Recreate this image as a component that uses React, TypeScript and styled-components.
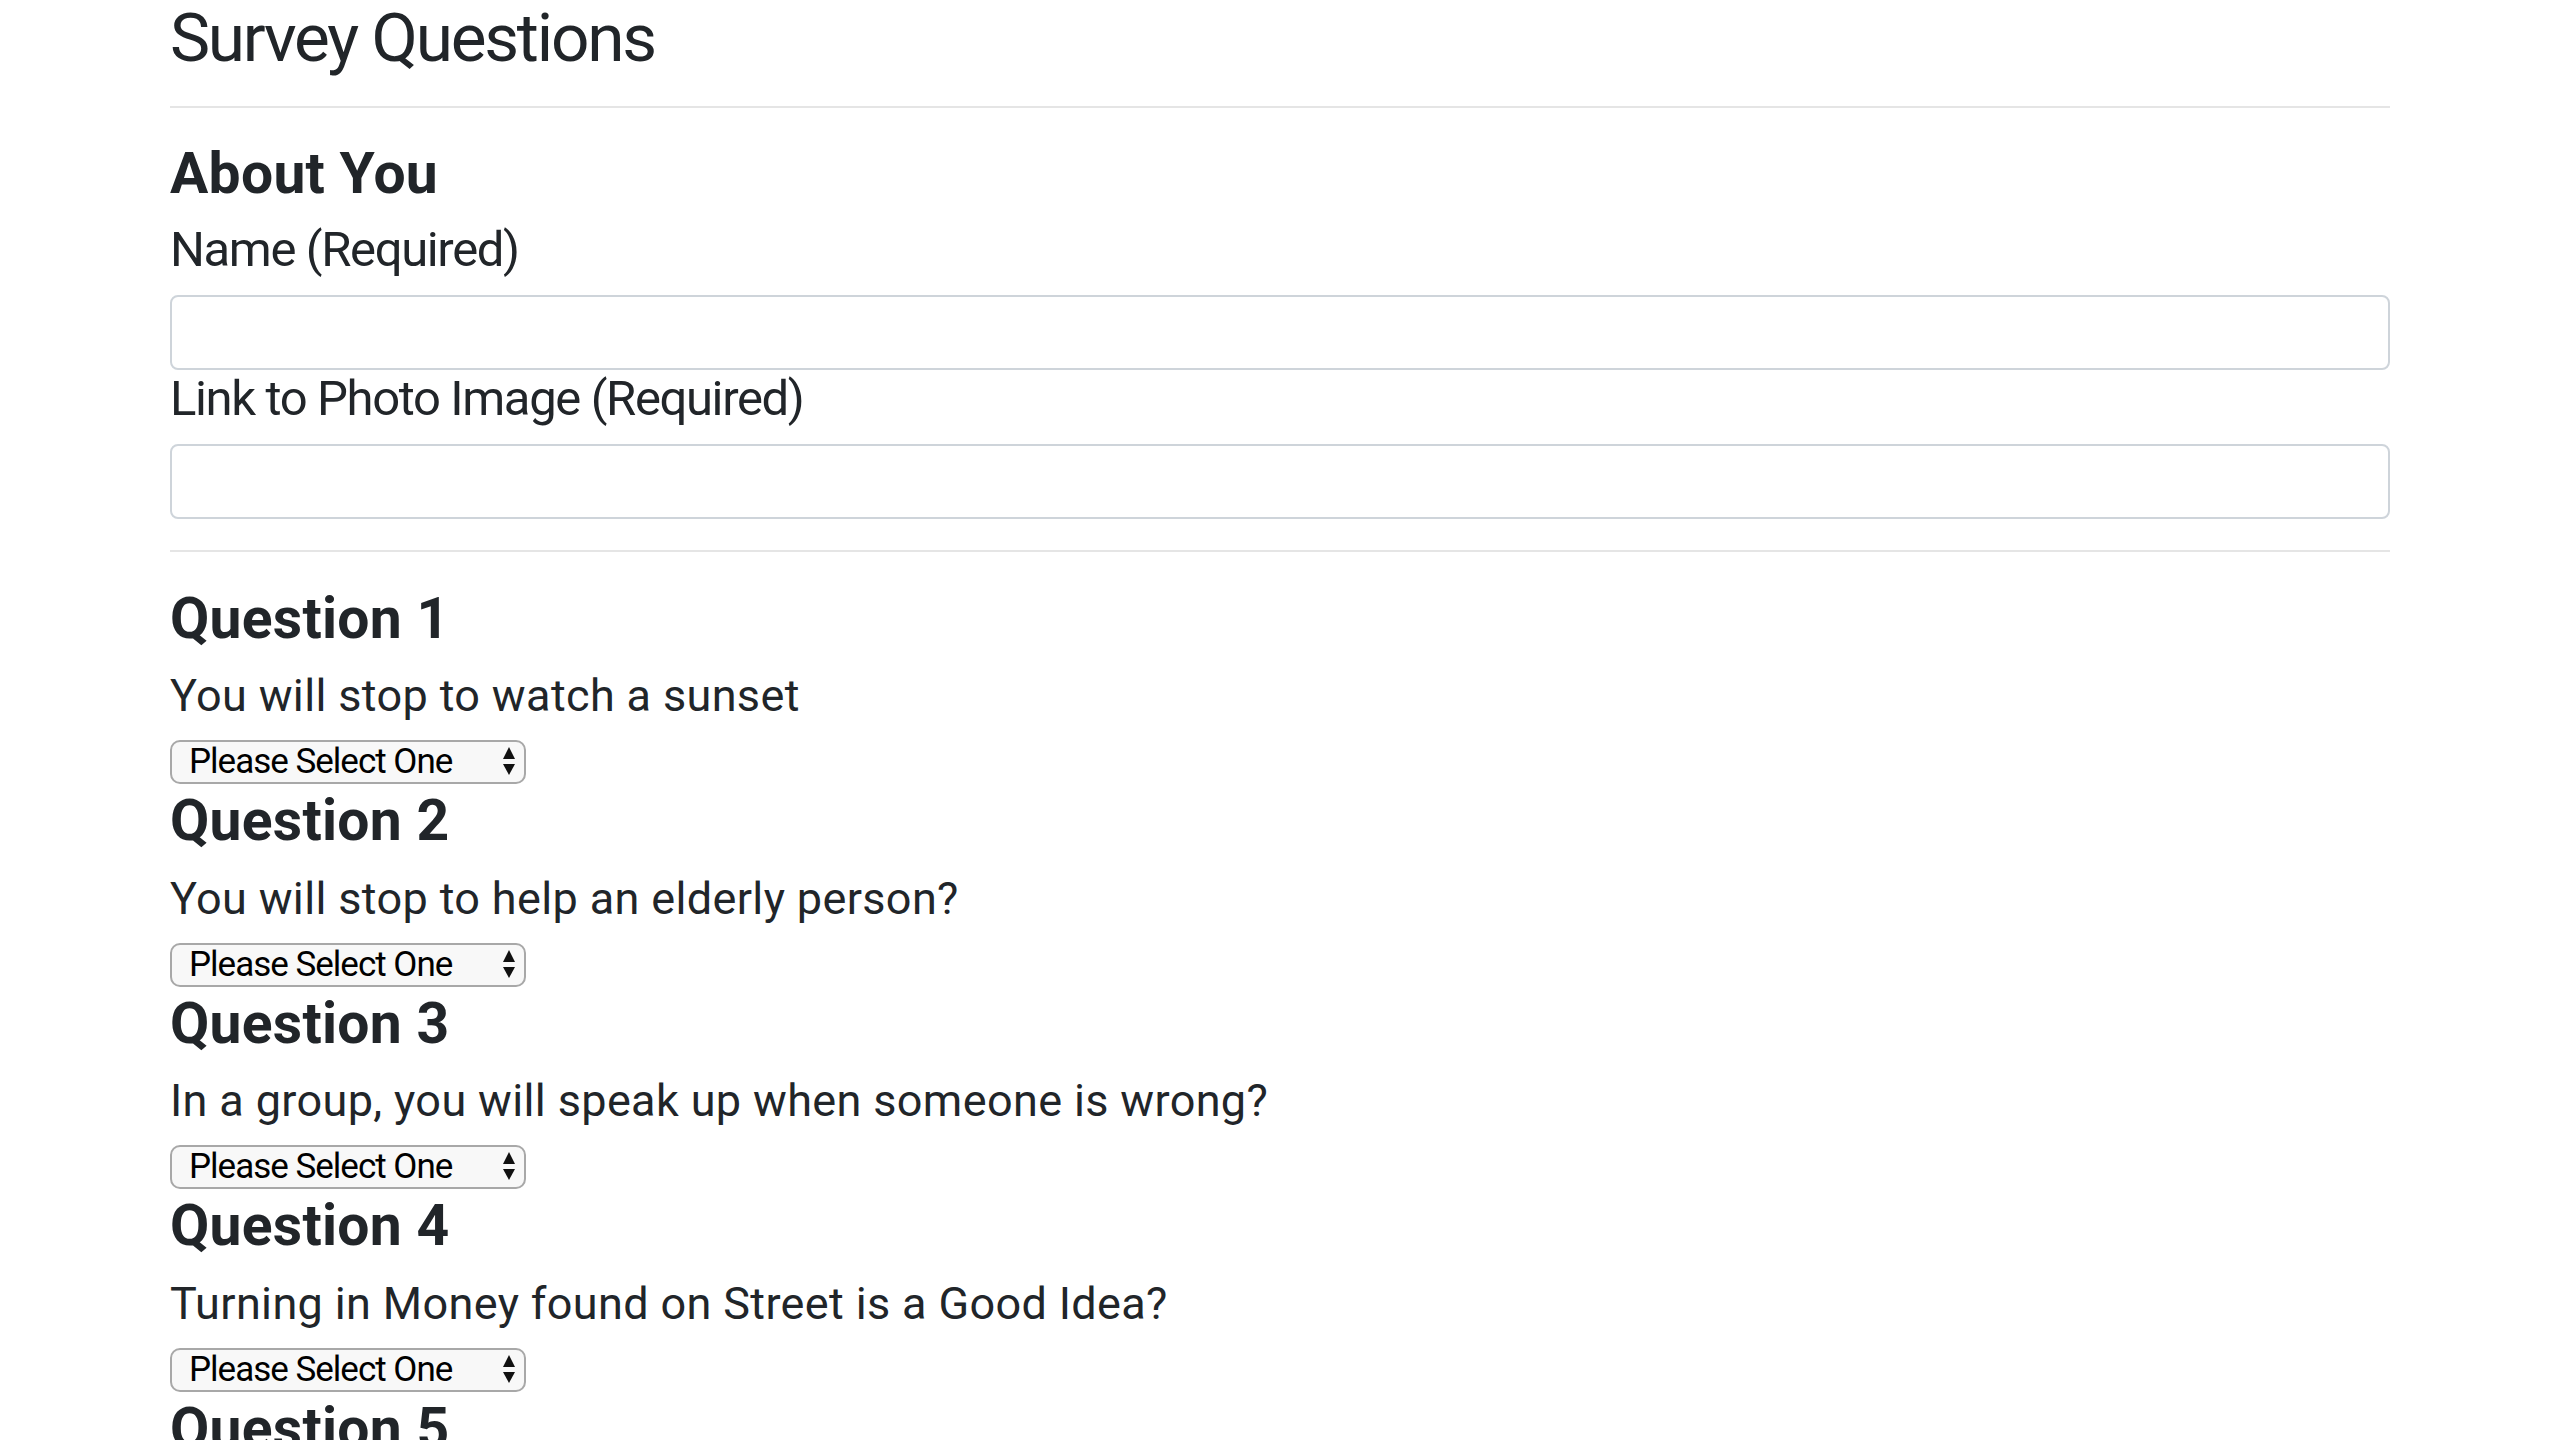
import styled, { createGlobalStyle } from "styled-components";

const GlobalStyle = createGlobalStyle`
  html, body {
    margin: 0;
    padding: 0;
    background: #ffffff;
  }
  body {
    font-family: Roboto, "Liberation Sans", sans-serif;
    color: #212529;
  }
`

const Page = styled.div`
  width: 2220px;
  margin: 0 auto;
`

const PageTitle = styled.h1`
  margin: 0;
  font-size: 67.5px;
  font-weight: 400;
  line-height: 76px;
  letter-spacing: -0.033em;
`

const Divider = styled.hr<{ $top: number }>`
  margin: ${(p) => p.$top}px 0 0;
  border: 0;
  border-top: 2px solid rgba(0, 0, 0, 0.1);
  height: 0;
`

const SectionTitle = styled.h3<{ $bottom: number }>`
  margin: 32px 0 ${(p) => p.$bottom}px;
  font-size: 57px;
  font-weight: 700;
  line-height: 1.2;
  letter-spacing: 0.005em;
`

const FieldLabel = styled.h4`
  margin: 0 0 15px;
  font-size: 49px;
  font-weight: 400;
  line-height: 1.2;
  letter-spacing: -0.028em;
`

const TextInput = styled.input`
  display: block;
  box-sizing: border-box;
  width: 100%;
  height: 75px;
  margin: 0;
  padding: 12px 24px;
  border: 2px solid #ced4da;
  border-radius: 8px;
  background: #ffffff;
  font-family: Roboto, sans-serif;
  font-size: 32px;
  color: #495057;
  outline: none;
`

const QuestionBlock = styled.div`
  display: flex;
  flex-direction: column;
  align-items: flex-start;
`

const QuestionTitle = styled.h3`
  margin: 0 0 16px;
  font-size: 57px;
  font-weight: 700;
  line-height: 1.2;
  letter-spacing: 0.005em;
`

const QuestionText = styled.h4`
  margin: 0 0 17px;
  font-size: 45px;
  font-weight: 400;
  line-height: 1.2;
  letter-spacing: 0.008em;
`

const SelectWrap = styled.div`
  position: relative;
  width: 356px;
  height: 44px;
  margin-bottom: 3px;
`

const Select = styled.select`
  appearance: none;
  -webkit-appearance: none;
  box-sizing: border-box;
  width: 100%;
  height: 100%;
  margin: 0;
  padding: 0 40px 0 17px;
  border: 2px solid #a8a8a8;
  border-radius: 10px;
  background: #f8f8f8;
  font-family: Roboto, "Liberation Sans", sans-serif;
  font-size: 35px;
  line-height: 40px;
  letter-spacing: -1px;
  color: #000000;
  outline: none;
`

const SelectArrows = styled.svg`
  position: absolute;
  top: 7px;
  right: 11px;
  width: 12px;
  height: 28px;
  pointer-events: none;
`

const answers = [
  "Please Select One",
  "1 (Strongly Disagree)",
  "2",
  "3",
  "4",
  "5 (Strongly Agree)",
]

const questions = [
  "You will stop to watch a sunset",
  "You will stop to help an elderly person?",
  "In a group, you will speak up when someone is wrong?",
  "Turning in Money found on Street is a Good Idea?",
  "You enjoy spending a quiet evening at home?",
]

const AnswerSelect = () => (
  <SelectWrap>
    <Select defaultValue="">
      {answers.map((a, i) => (
        <option key={a} value={i === 0 ? "" : String(i)}>
          {a}
        </option>
      ))}
    </Select>
    <SelectArrows viewBox="0 0 12 28">
      <polygon points="6,0 12,12 0,12" fill="#111" />
      <polygon points="0,17 12,17 6,28" fill="#111" />
    </SelectArrows>
  </SelectWrap>
)

export default function App() {
  return (
    <>
      <GlobalStyle />
      <Page>
        <PageTitle>Survey Questions</PageTitle>
        <Divider $top={30} />
        <SectionTitle $bottom={13}>About You</SectionTitle>
        <FieldLabel>Name (Required)</FieldLabel>
        <TextInput type="text" />
        <FieldLabel>Link to Photo Image (Required)</FieldLabel>
        <TextInput type="text" />
        <Divider $top={31} />
        <div style={{ height: 33 }} />
        {questions.map((q, i) => (
          <QuestionBlock key={q}>
            <QuestionTitle>Question {i + 1}</QuestionTitle>
            <QuestionText>{q}</QuestionText>
            <AnswerSelect />
          </QuestionBlock>
        ))}
      </Page>
    </>
  )
}
